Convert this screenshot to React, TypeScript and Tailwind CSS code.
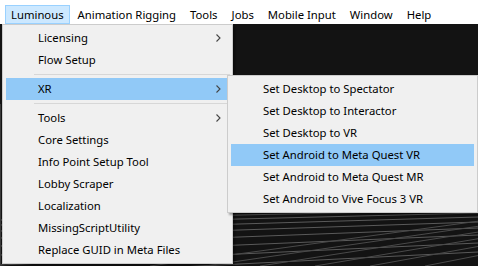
import { ReactNode } from 'react'

type Item = { label: string; sub?: boolean; active?: boolean } | 'sep'

const menuBar = ['Luminous', 'Animation Rigging', 'Tools', 'Jobs', 'Mobile Input', 'Window', 'Help']

const luminousItems: Item[] = [
  { label: 'Licensing', sub: true },
  { label: 'Flow Setup' },
  'sep',
  { label: 'XR', sub: true, active: true },
  'sep',
  { label: 'Tools', sub: true },
  { label: 'Core Settings' },
  { label: 'Info Point Setup Tool' },
  { label: 'Lobby Scraper' },
  { label: 'Localization' },
  { label: 'MissingScriptUtility' },
  { label: 'Replace GUID in Meta Files' },
]

const xrItems: Item[] = [
  { label: 'Set Desktop to Spectator' },
  { label: 'Set Desktop to Interactor' },
  { label: 'Set Desktop to VR' },
  { label: 'Set Android to Meta Quest VR', active: true },
  { label: 'Set Android to Meta Quest MR' },
  { label: 'Set Android to Vive Focus 3 VR' },
]

function Chevron() {
  return (
    <svg width="5" height="8" viewBox="0 0 5 8" className="shrink-0">
      <path d="M0.5 0.5 L4 4 L0.5 7.5" fill="none" stroke="#444" strokeWidth="1.1" />
    </svg>
  )
}

function MenuPanel({ items, className }: { items: Item[]; className: string }) {
  return (
    <div className={`absolute border border-[#cccccc] bg-[#f0f0f0] py-[2px] shadow-[2px_2px_2px_rgba(0,0,0,0.35)] ${className}`}>
      {items.map((item, i) =>
        item === 'sep' ? (
          <div key={i} className="flex h-[7px] items-center pl-[31px] pr-[2px]">
            <div className="h-px w-full bg-[#d7d7d7]" />
          </div>
        ) : (
          <div
            key={i}
            className={`mx-[3px] flex h-[22px] items-center pl-[32px] pr-[8px] ${item.active ? 'bg-[#91c9f7]' : ''}`}
          >
            <span className="flex-1 whitespace-nowrap">{item.label}</span>
            {item.sub && <Chevron />}
          </div>
        )
      )}
    </div>
  )
}

function SceneGrid({ children }: { children?: ReactNode }) {
  const flat = [214, 218, 223, 229, 236, 244, 253, 263]
  return (
    <div className="relative flex-1 bg-[#131313]">
      <svg className="absolute inset-0 h-full w-full" viewBox="0 0 478 242" preserveAspectRatio="none">
        {flat.map((y, i) => (
          <line key={i} x1="0" y1={y - 24 + 6 + i} x2="478" y2={y - 24 - 4 - i} stroke="#5a5a5a" strokeWidth="1" />
        ))}
        {[0, 1, 2, 3, 4, 5, 6].map((i) => (
          <line key={'d' + i} x1={150 + i * 55} y1="242" x2={560 + i * 30} y2="186" stroke="#4a4a4a" strokeWidth="1" />
        ))}
        <line x1="0" y1="80" x2="0" y2="242" stroke="#3a3a3a" strokeWidth="2" />
      </svg>
      {children}
    </div>
  )
}

export default function App() {
  return (
    <div
      className="relative flex h-[266px] w-[478px] flex-col overflow-hidden bg-[#131313] text-[11.3px] text-black"
      style={{ fontFamily: '"Noto Sans", "Open Sans", sans-serif' }}
    >
      <div className="flex h-[24px] shrink-0 items-end gap-[2px] bg-white pl-[5px]">
        {menuBar.map((m, i) => (
          <div
            key={m}
            className={`flex h-[19px] items-center border px-[5px] leading-none ${
              i === 0 ? 'border-[#99d1ff] bg-[#cce8ff]' : 'border-transparent'
            }`}
          >
            {m}
          </div>
        ))}
      </div>
      <SceneGrid />

      <MenuPanel items={luminousItems} className="left-[2px] top-[24px] w-[231px]" />
      <MenuPanel items={xrItems} className="left-[227px] top-[75px] w-[251px]" />
    </div>
  )
}
